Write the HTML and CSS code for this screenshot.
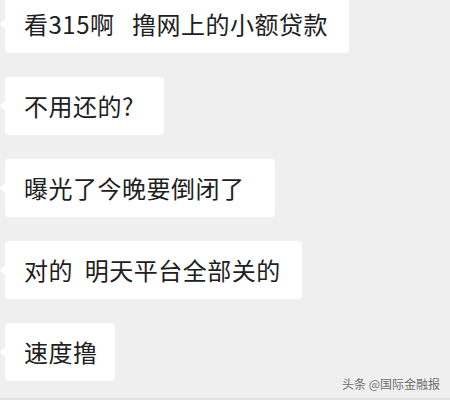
FILE: index.html
```html
<!DOCTYPE html>
<html lang="zh-CN">
<head>
<meta charset="utf-8">
<link rel="stylesheet" href="styles.css">
</head>
<body>
<div class="screen">
  <div class="chat">
    <div class="bubble">看315啊&nbsp;&nbsp; 撸网上的小额贷款</div>
    <div class="bubble bubble-wide">不用还的?</div>
    <div class="bubble bubble-wide">曝光了今晚要倒闭了</div>
    <div class="bubble">对的&nbsp; 明天平台全部关的</div>
    <div class="bubble bubble-narrow">速度撸</div>
  </div>
  <div class="watermark">头条 @国际金融报</div>
</div>
</body>
</html>
```
FILE: styles.css
```css
html, body {
  margin: 0;
  padding: 0;
}
body {
  background: #efefef;
  font-family: "Noto Sans CJK SC", "Noto Sans", sans-serif;
}
.screen {
  position: relative;
  width: 450px;
  height: 400px;
  overflow: hidden;
  background: #efefef;
  box-shadow: inset 0 -2px 0 #e2e2e2;
}
.chat {
  display: flex;
  flex-direction: column;
  align-items: flex-start;
  gap: 24px;
  margin-top: -5px;
  padding-left: 5px;
}
.bubble {
  position: relative;
  height: 58px;
  display: flex;
  align-items: center;
  padding: 0 21px 0 19px;
  background: #ffffff;
  border-radius: 4px;
  color: #202020;
  font-size: 24px;
  letter-spacing: 0.5px;
  line-height: 1;
  white-space: nowrap;
}
.bubble::before {
  content: "";
  position: absolute;
  left: -5px;
  top: 24px;
  border-top: 5px solid transparent;
  border-bottom: 5px solid transparent;
  border-right: 5px solid #ffffff;
}
.bubble-wide {
  padding-right: 30px;
}
.bubble-narrow {
  padding-right: 17px;
}
.watermark {
  position: absolute;
  right: 10px;
  bottom: 8px;
  font-size: 12px;
  color: #6a6a6a;
  text-shadow: 0 0 2px #ffffff;
}
```
